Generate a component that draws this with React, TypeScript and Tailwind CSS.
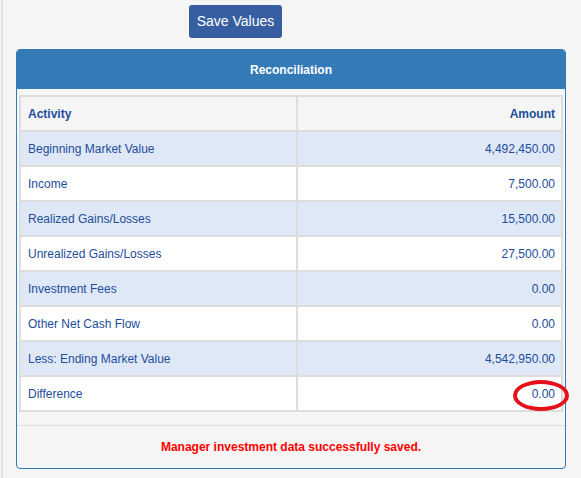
const rows: { label: string; amount: string }[] = [
  { label: "Beginning Market Value", amount: "4,492,450.00" },
  { label: "Income", amount: "7,500.00" },
  { label: "Realized Gains/Losses", amount: "15,500.00" },
  { label: "Unrealized Gains/Losses", amount: "27,500.00" },
  { label: "Investment Fees", amount: "0.00" },
  { label: "Other Net Cash Flow", amount: "0.00" },
  { label: "Less: Ending Market Value", amount: "4,542,950.00" },
  { label: "Difference", amount: "0.00" },
];

const App = () => {
  return (
    <div
      className="min-h-screen bg-[#f5f5f5] pl-[1px]"
      style={{ fontFamily: '"Liberation Sans", Arial, sans-serif' }}
    >
      <div className="min-h-screen border-l-2 border-[#e2e2e2] pl-[13px] pt-[5px]">
        <button className="ml-[173px] flex h-[33px] w-[93px] items-center justify-center rounded-[3px] bg-[#365ea0] text-[14px] text-white">
          Save Values
        </button>

        <div className="mt-[11px] w-[550px] rounded-[4px] border border-[#337ab7] bg-[#f5f5f5]">
          <div className="flex h-[39px] items-center justify-center rounded-t-[3px] bg-[#337ab7] text-[12px] font-bold text-white">
            Reconciliation
          </div>

          <div className="px-[2px] pt-[6px] pb-[13px]">
            <table className="w-full border-collapse border-2 border-[#dddddd] text-[12px] text-[#1d4d9b]">
              <thead>
                <tr className="bg-[#f5f5f5]">
                  <th className="h-[35px] w-[277px] border-2 border-[#dddddd] pl-[7px] text-left font-bold">
                    Activity
                  </th>
                  <th className="h-[35px] border-2 border-[#dddddd] pr-[6px] text-right font-bold">
                    Amount
                  </th>
                </tr>
              </thead>
              <tbody>
                {rows.map((r, i) => (
                  <tr
                    key={r.label}
                    className={i % 2 === 0 ? "bg-[#dfe8f6]" : "bg-white"}
                  >
                    <td className="h-[35px] border-2 border-[#dddddd] pl-[7px]">
                      {r.label}
                    </td>
                    <td className="relative h-[35px] border-2 border-[#dddddd] pr-[6px] text-right">
                      {r.amount}
                      {r.label === "Difference" && (
                        <span className="absolute right-[-8px] top-[3px] h-[31px] w-[56px] rounded-[50%] border-[4px] border-[#e5101a]" />
                      )}
                    </td>
                  </tr>
                ))}
              </tbody>
            </table>
          </div>

          <div className="flex h-[43px] items-center justify-center border-t border-[#dddddd] text-[12px] font-bold text-[#ff0000]">
            Manager investment data successfully saved.
          </div>
        </div>
      </div>
    </div>
  );
};

export default App;
